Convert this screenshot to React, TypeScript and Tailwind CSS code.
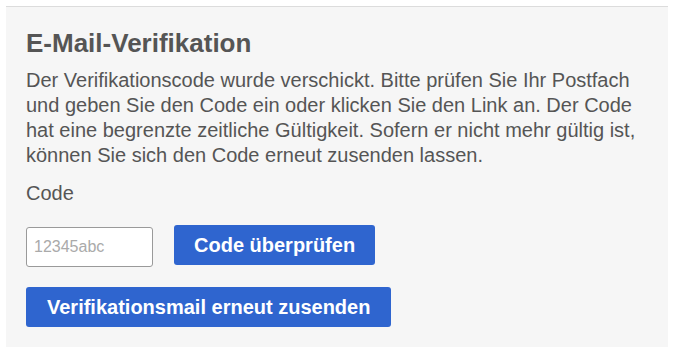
import React from 'react';

export default function App() {
  return (
    <div className="w-[681px] h-[357px] bg-white pt-[6px] px-[6px] [font-family:'Liberation_Sans',Arial,sans-serif] text-[#555]">
      <section className="w-[662px] border-t border-[#dcdcdc] bg-[#f6f6f6] px-5 pt-5 pb-5">
        <h2 className="text-[26px] leading-[32px] font-bold text-[#555]">E-Mail-Verifikation</h2>
        <p className="mt-[9px] text-[20px] leading-[25px]">
          Der Verifikationscode wurde verschickt. Bitte prüfen Sie Ihr Postfach und geben Sie den Code ein oder klicken Sie den Link an. Der Code hat eine begrenzte zeitliche Gültigkeit. Sofern er nicht mehr gültig ist, können Sie sich den Code erneut zusenden lassen.
        </p>
        <label htmlFor="code" className="block mt-[13px] text-[20px] leading-[25px]">Code</label>
        <div className="mt-[19px] flex items-start gap-[21px]">
          <input
            id="code"
            type="text"
            placeholder="12345abc"
            className="mt-[2px] w-[127px] h-[40px] rounded-[3px] border border-[#9a9a9a] bg-white px-[7px] text-[16px] text-[#333] placeholder:text-[#aaa] outline-none"
          />
          <button className="h-[40px] rounded-[3px] bg-[#2f65cf] px-5 text-[20px] font-bold text-white">
            Code überprüfen
          </button>
        </div>
        <button className="mt-[20px] h-[40px] rounded-[3px] bg-[#2f65cf] px-[21px] text-[20px] font-bold text-white">
          Verifikationsmail erneut zusenden
        </button>
      </section>
    </div>
  );
}
